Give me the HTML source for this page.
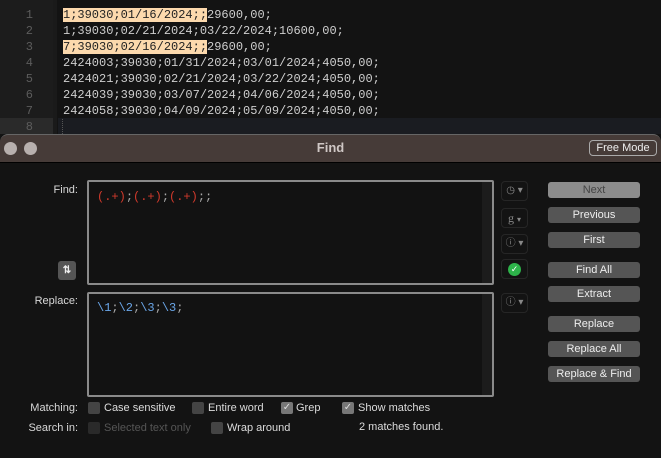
<!DOCTYPE html>
<html><head><meta charset="utf-8"><style>
*{margin:0;padding:0;box-sizing:border-box}
body{width:661px;height:458px;overflow:hidden;background:#131313;position:relative;font-family:"Liberation Sans",sans-serif}
.a{position:absolute}
.gut{left:0;top:0;width:53px;height:134px;background:#1c1c1c}
.ln{left:0;width:33px;text-align:right;font:12px "Liberation Mono",monospace;color:#5c5c5c;line-height:16px}
.code{left:63px;font:12px "Liberation Mono",monospace;color:#cfcfcf;line-height:16px;white-space:pre}
.hl{background:#fcd9ad;color:#222}
.lbl{font-size:11px;color:#d8d8d8;text-align:right}
.box{background:#121212;border:2px solid #8a8a8a;border-radius:2px}
.sb{position:absolute;right:0;top:0;bottom:0;width:10px;background:#1c1c1c}
.btn{left:548px;width:92px;height:16px;background:#555;border-radius:3px;color:#eee;font-size:11px;text-align:center;line-height:16px}
.ib{left:501px;width:27px;height:20px;border:1px solid #262626;border-radius:4px;color:#888;font-size:10px;text-align:center;line-height:18px}
.cb{width:12px;height:12px;background:#444;border-radius:2px;color:#ddd;font-size:10px;line-height:12px;text-align:center}
.t{font-size:11px;color:#dcdcdc}
</style></head><body>
<div class="a gut"></div>
<div class="a" style="left:53px;top:0;width:4px;height:134px;background:#1a1a1a"></div>
<div class="a" style="left:0;top:118px;width:53px;height:16px;background:#2a2a2a"></div>
<div class="a" style="left:58px;top:118px;width:603px;height:16px;background:#1a1c21"></div>
<div class="a" style="left:62px;top:119px;height:15px;border-left:1px dotted #555"></div>
<div class="a ln" style="top:7px">1<br>2<br>3<br>4<br>5<br>6<br>7<br>8</div>
<div class="a code" style="top:7px"><span class="hl">1;39030;01/16/2024;;</span>29600,00;
1;39030;02/21/2024;03/22/2024;10600,00;
<span class="hl">7;39030;02/16/2024;;</span>29600,00;
2424003;39030;01/31/2024;03/01/2024;4050,00;
2424021;39030;02/21/2024;03/22/2024;4050,00;
2424039;39030;03/07/2024;04/06/2024;4050,00;
2424058;39030;04/09/2024;05/09/2024;4050,00;</div>
<div class="a" style="left:0;top:134px;width:661px;height:28px;background:#463b38;border-radius:8px 8px 0 0;border-top:1px solid #666"></div>
<div class="a" style="left:4px;top:142px;width:13px;height:13px;border-radius:50%;background:#b8b0ae"></div>
<div class="a" style="left:24px;top:142px;width:13px;height:13px;border-radius:50%;background:#b8b0ae"></div>
<div class="a" style="left:0;top:140px;width:661px;text-align:center;font-size:13px;font-weight:bold;color:#cfc7c5">Find</div>
<div class="a" style="left:589px;top:140px;width:68px;height:16px;border:1px solid #aaa;border-radius:4px;color:#eee;font-size:11px;text-align:center;line-height:14px;background:transparent">Free Mode</div>
<div class="a" style="left:0;top:162px;width:661px;height:1px;background:#000"></div>

<div class="a lbl" style="left:30px;top:184px;width:48px">Find:</div>
<div class="a box" style="left:87px;top:180px;width:407px;height:105px"><div class="sb"></div>
<div class="a" style="left:8px;top:8px;font:12px 'Liberation Mono',monospace;color:#d23a2c">(.+)<span style="color:#aaa">;</span>(.+)<span style="color:#aaa">;</span>(.+)<span style="color:#aaa">;;</span></div></div>
<div class="a" style="left:58px;top:261px;width:18px;height:19px;background:#555;border-radius:3px;color:#eee;font-size:10px;text-align:center;line-height:19px;font-weight:bold">⇅</div>
<div class="a lbl" style="left:20px;top:295px;width:58px">Replace:</div>
<div class="a box" style="left:87px;top:292px;width:407px;height:105px"><div class="sb"></div>
<div class="a" style="left:8px;top:7px;font:12px 'Liberation Mono',monospace;color:#6aa6e8">\1<span style="color:#aaa">;</span>\2<span style="color:#aaa">;</span>\3<span style="color:#aaa">;</span>\3<span style="color:#aaa">;</span></div></div>

<div class="a ib" style="top:181px">◷ ▾</div>
<div class="a ib" style="top:208px;font-family:'Liberation Serif',serif;font-size:12px">g <span style="font-size:8px">▾</span></div>
<div class="a ib" style="top:234px">ⓘ ▾</div>
<div class="a ib" style="top:259px"><div style="width:13px;height:13px;border-radius:50%;background:#2db34a;margin:3px auto;color:#fff;font-size:9px;line-height:13px">✓</div></div>
<div class="a ib" style="top:293px">ⓘ ▾</div>

<div class="a btn" style="top:182px;background:#8c8c8c;color:#444">Next</div>
<div class="a btn" style="top:207px">Previous</div>
<div class="a btn" style="top:232px">First</div>
<div class="a btn" style="top:262px">Find All</div>
<div class="a btn" style="top:286px">Extract</div>
<div class="a btn" style="top:316px">Replace</div>
<div class="a btn" style="top:341px">Replace All</div>
<div class="a btn" style="top:366px">Replace &amp; Find</div>

<div class="a lbl" style="left:10px;top:402px;width:68px">Matching:</div>
<div class="a cb" style="left:88px;top:402px"></div><div class="a t" style="left:104px;top:402px">Case sensitive</div>
<div class="a cb" style="left:192px;top:402px"></div><div class="a t" style="left:208px;top:402px">Entire word</div>
<div class="a cb" style="left:281px;top:402px;background:#777">✓</div><div class="a t" style="left:296px;top:402px">Grep</div>
<div class="a cb" style="left:342px;top:402px;background:#777">✓</div><div class="a t" style="left:358px;top:402px">Show matches</div>
<div class="a lbl" style="left:10px;top:422px;width:68px">Search in:</div>
<div class="a cb" style="left:88px;top:422px;background:#2a2a2a"></div><div class="a t" style="left:104px;top:422px;color:#555">Selected text only</div>
<div class="a cb" style="left:211px;top:422px"></div><div class="a t" style="left:227px;top:422px">Wrap around</div>
<div class="a t" style="left:359px;top:421px">2 matches found.</div>
</body></html>
